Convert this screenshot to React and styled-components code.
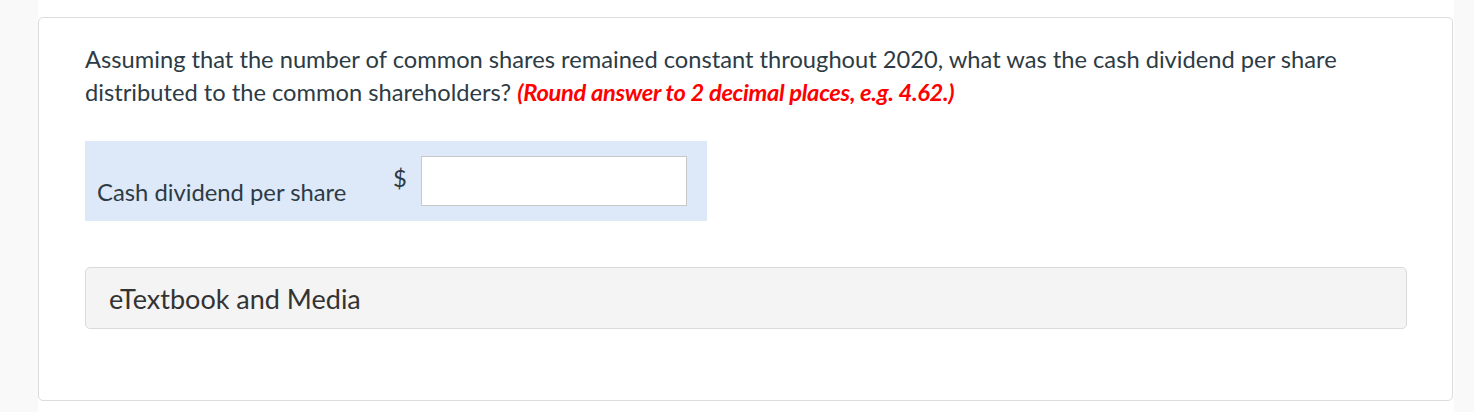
import React from "react";
import styled, { createGlobalStyle } from "styled-components";

const GlobalStyle = createGlobalStyle`
  body {
    margin: 0;
    background: #f9f9f9;
    font-family: Lato, "Open Sans", sans-serif;
    color: #2d3b45;
  }
`;

const Column = styled.div`
  margin-left: 38px;
  width: 1416px;
  height: 412px;
  background: #fff;
  padding-top: 17px;
  box-sizing: border-box;
`;

const Card = styled.div`
  border: 1px solid #dcdcdc;
  border-radius: 5px;
  width: 1415px;
  height: 384px;
  box-sizing: border-box;
  padding: 25px 45px 0 46px;
`;

const Question = styled.p`
  margin: 0;
  font-size: 23.7px;
  line-height: 33px;
  color: #2d3b45;
`;

const Hint = styled.span`
  color: #ff0000;
  font-weight: 700;
  font-style: italic;
  letter-spacing: -0.3px;
`;

const AnswerRow = styled.div`
  margin-top: 32px;
  width: 622px;
  height: 80px;
  box-sizing: border-box;
  background: #dde8f8;
  display: flex;
  padding: 15px 20px 15px 12px;
`;

const Label = styled.div`
  width: 296px;
  font-size: 23.8px;
  line-height: 24px;
  align-self: flex-end;
  margin-bottom: 2px;
`;

const Currency = styled.div`
  font-size: 23.8px;
  line-height: 24px;
  width: 28px;
  margin-top: 10px;
`;

const Input = styled.input`
  width: 266px;
  height: 50px;
  box-sizing: border-box;
  border: 1px solid #c8c8c8;
  background: #fff;
  outline: none;
  font-family: inherit;
  font-size: 20px;
`;

const MediaBox = styled.div`
  margin-top: 46px;
  height: 62px;
  box-sizing: border-box;
  background: #f4f4f4;
  border: 1px solid #dadada;
  border-radius: 5px;
  display: flex;
  align-items: center;
  padding-left: 23px;
  font-size: 27px;
  color: #333;
`;

export default function App() {
  return (
    <>
      <GlobalStyle />
      <Column>
        <Card>
          <Question>
            Assuming that the number of common shares remained constant
            throughout 2020, what was the cash dividend per share distributed
            to the common shareholders?{" "}
            <Hint>(Round answer to 2 decimal places, e.g. 4.62.)</Hint>
          </Question>
          <AnswerRow>
            <Label>Cash dividend per share</Label>
            <Currency>$</Currency>
            <Input type="text" />
          </AnswerRow>
          <MediaBox>eTextbook and Media</MediaBox>
        </Card>
      </Column>
    </>
  );
}
